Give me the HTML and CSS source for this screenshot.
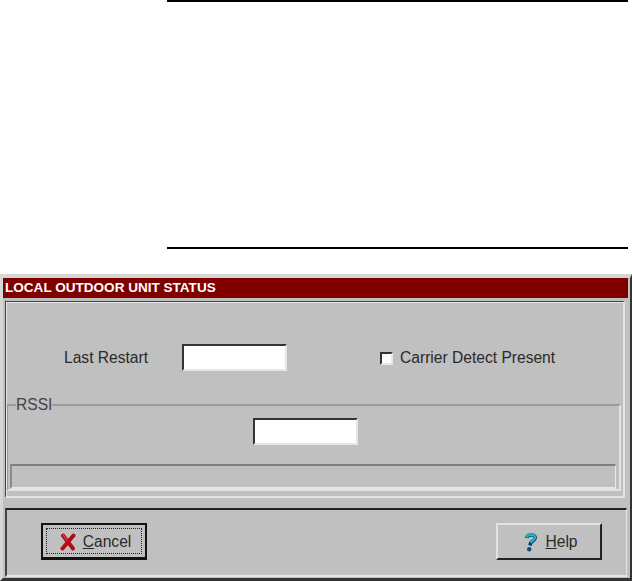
FILE: index.html
```html
<!DOCTYPE html>
<html lang="en">
<head>
  <meta charset="UTF-8">
  <title>Local Outdoor Unit Status</title>
  <link rel="stylesheet" href="styles.css">
</head>
<body>
  <!-- Figure placeholder -->
  <div class="figure-rules"></div>

  <!-- Dialog -->
  <div class="dialog">
    <div class="title-bar">LOCAL OUTDOOR UNIT STATUS</div>

    <div class="main-panel">
      <div class="top-row">
        <span class="restart-label">Last Restart</span>
        <input class="field" type="text">
        <label class="carrier">
          <span class="check"></span>
          <span>Carrier Detect Present</span>
        </label>
      </div>

      <fieldset class="rssi">
        <legend>RSSI</legend>
        <div class="rssi-row">
          <input class="field" type="text">
        </div>
        <div class="status-bar"></div>
      </fieldset>
    </div>

    <div class="button-panel">
      <button class="btn btn-default">
        <span class="btn-focus">
          <svg class="icon" width="16" height="18" viewBox="0 0 16 18">
            <path d="M3 2.5 L13 15.5 M13.5 2.5 L2.5 15.5" stroke="#b30d14" stroke-width="4" stroke-linecap="round" fill="none"/>
            <path d="M3 2 L7 7" stroke="#e0656a" stroke-width="1" stroke-linecap="round" fill="none"/>
          </svg>
          <span><u>C</u>ancel</span>
        </span>
      </button>
      <button class="btn">
        <span class="btn-focus">
          <svg class="icon" width="15" height="19" viewBox="0 0 15 19">
            <path d="M3.5 5 C4 2.5 7 1.8 9 2 C11.5 2.2 12.5 3.8 12 5.5 C11.4 7.5 8.6 8.4 7.6 10 L7 12.5" stroke="#0d3f6e" stroke-width="3.6" fill="none"/>
            <path d="M3.5 4.5 C4 2.2 7 1.5 9 1.7 C11.2 1.9 12.2 3.3 11.8 5 C11.2 7 8.6 8 7.6 9.6" stroke="#21b0c4" stroke-width="2.6" fill="none"/>
            <circle cx="6.2" cy="16.3" r="2.2" fill="#0d4f7e"/>
          </svg>
          <span><u>H</u>elp</span>
        </span>
      </button>
    </div>
  </div>
</body>
</html>
```

FILE: styles.css
```css
/* Reset */
* {
  margin: 0;
  padding: 0;
  box-sizing: border-box;
}
body {
  font-family: "Liberation Sans", Arial, sans-serif;
  font-size: 15.6px;
  color: #2a2a2a;
  background: #fff;
  overflow: hidden;
}

/* Rules above the dialog */
.figure-rules {
  height: 249px;
  margin-left: 167px;
  width: 461px;
  border-top: 2px solid #000;
  border-bottom: 2px solid #000;
}

/* Dialog */
.dialog {
  margin-top: 25px;
  height: 307px;
  background: #c0c0c0;
  border-top: 4px solid #d6d6d6;
  border-left: 3px solid #d6d6d6;
  border-right: 2px solid #333;
  border-bottom: 3px solid #333;
  padding-right: 2px;
}
.title-bar {
  height: 20px;
  line-height: 20px;
  background: #800000;
  color: #fff;
  font-size: 13.55px;
  font-weight: bold;
  padding-left: 2px;
  white-space: nowrap;
}

/* Main panel */
.main-panel {
  height: 197px;
  margin: 3px 3px 0 2px;
  border-top: 1px solid #444;
  border-left: 1px solid #444;
  border-right: 2px solid #e4e4e4;
  border-bottom: 2px solid #e4e4e4;
  box-shadow: inset 1px 1px 0 #e4e4e4;
}
.top-row {
  display: flex;
  align-items: center;
  height: 27px;
  margin-top: 42px;
  padding-left: 58px;
}
.restart-label {
  width: 118px;
}
.field {
  display: block;
  width: 105px;
  height: 27px;
  background: #fff;
  border: 2px solid #e6e6e6;
  border-top-color: #333;
  border-left-color: #333;
  outline: none;
}
.carrier {
  display: flex;
  align-items: center;
  gap: 7px;
  margin-left: 93px;
}
.check {
  width: 13px;
  height: 13px;
  margin-top: 1px;
  background: #fff;
  border: 2px solid #e6e6e6;
  border-top-color: #333;
  border-left-color: #333;
}

/* RSSI group */
.rssi {
  height: 93px;
  margin: 27px 2px 0 1px;
  border-top: 2px solid #9a9a9a;
  border-left: 1px solid #9a9a9a;
  border-right: 2px solid #e2e2e2;
  border-bottom: 2px solid #e2e2e2;
}
.rssi legend {
  margin-left: 8px;
  line-height: 14px;
  color: #444;
}
.rssi-row {
  display: flex;
  justify-content: center;
  margin-top: 6px;
  padding-right: 17px;
}
.status-bar {
  height: 25px;
  margin: 19px 3px 0 2px;
  border-top: 2px solid #7f7f7f;
  border-left: 2px solid #8c8c8c;
  border-right: 1px solid #e8e8e8;
  border-bottom: 2px solid #e8e8e8;
}

/* Button panel */
.button-panel {
  display: flex;
  justify-content: space-between;
  height: 69px;
  margin: 10px 1px 0 2px;
  padding: 13px 24px 0 34px;
  border-top: 2px solid #222;
  border-left: 2px solid #444;
  border-right: 1px solid #e4e4e4;
  border-bottom: 2px solid #e4e4e4;
}
.btn {
  width: 106px;
  height: 37px;
  padding: 3px;
  background: #c0c0c0;
  font-family: inherit;
  font-size: 15.6px;
  color: #2a2a2a;
  border: 2px solid #e2e2e2;
  border-right-color: #222;
  border-bottom-color: #222;
}
.btn-default {
  border: 2px solid #111;
  border-bottom-width: 3px;
}
.btn-focus {
  display: flex;
  align-items: center;
  justify-content: center;
  gap: 7px;
  height: 100%;
  padding: 1px 0 0 3px;
}
.btn-default .btn-focus {
  border: 1px dotted #222;
}
.icon {
  display: block;
  flex: none;
}
```
